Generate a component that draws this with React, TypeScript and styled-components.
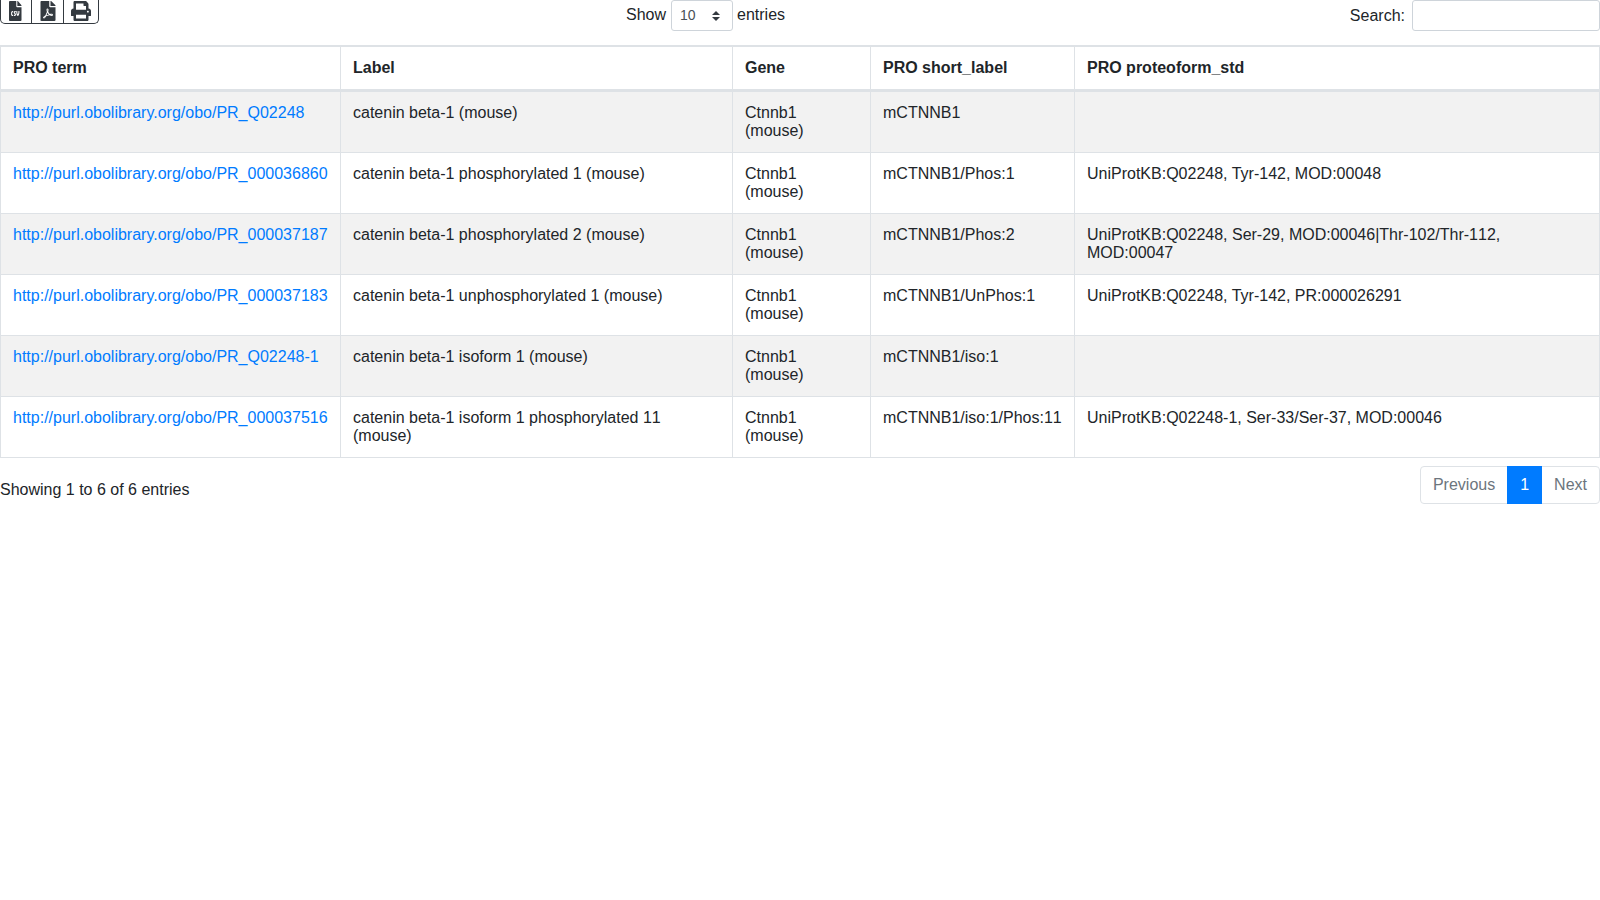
import React from 'react';
import styled, { createGlobalStyle } from 'styled-components';
import { FaFileCsv, FaFilePdf, FaPrint } from 'react-icons/fa';

const GlobalStyle = createGlobalStyle`
  body {
    margin: 0;
    background-color: #fff;
    font-family: "Liberation Sans", Arial, sans-serif;
    font-size: 16px;
    line-height: 18px;
    color: #212529;
  }
`;

const Toolbar = styled.div`
  display: grid;
  grid-template-columns: 410.5px 590px 1fr;
  align-items: start;
  height: 45px;
`;

const ButtonGroup = styled.div`
  display: flex;
  width: fit-content;
  height: 23px;
  border: 1px solid #343a40;
  border-top: none;
  border-radius: 0 0 5px 5px;
`;

const IconButton = styled.button<{ $w: number }>`
  display: flex;
  align-items: center;
  justify-content: center;
  width: ${(p) => p.$w}px;
  padding: 0 0 2px;
  background: none;
  border: none;
  border-left: 1px solid #343a40;
  color: #343a40;
  font-size: 20px;

  &:first-child {
    padding-right: 1px;
    border-left: none;
  }
`;

const CsvIcon = styled(FaFileCsv)`
  width: 12.5px;
  height: 20px;
`;

const LengthControl = styled.label`
  display: flex;
  justify-content: center;
  align-items: baseline;
  gap: 5px;
`;

const FakeSelect = styled.div`
  display: flex;
  align-items: center;
  justify-content: space-between;
  box-sizing: border-box;
  width: 62px;
  height: 31px;
  margin-right: -1px;
  padding: 0 12px 2px 8px;
  border: 1px solid #ced4da;
  border-radius: 3px;
  font-size: 14px;
  color: #495057;

  svg {
    margin-top: 2px;
  }
`;

const SearchControl = styled.label`
  display: flex;
  justify-content: flex-end;
  align-items: center;
  gap: 7px;
  height: 31px;
`;

const SearchInput = styled.input`
  box-sizing: border-box;
  width: 188px;
  height: 31px;
  border: 1px solid #ced4da;
  border-radius: 3px;
`;

const Table = styled.table`
  width: 100%;
  table-layout: fixed;
  border-collapse: separate;
  border-spacing: 0;
  border: 1px solid #dee2e6;
  border-right: none;
`;

const HeadCell = styled.th`
  padding: 12px;
  border-top: 1px solid #dee2e6;
  border-right: 1px solid #dee2e6;
  border-bottom: 2px solid #dee2e6;
  text-align: left;
  font-weight: 700;
`;

const Row = styled.tr<{ $striped: boolean }>`
  background-color: ${(p) => (p.$striped ? '#f2f2f2' : '#fff')};
`;

// the reference sets "11" without its kerning pair
const Cell = styled.td<{ $text?: string }>`
  padding: 12px;
  border-top: 1px solid #dee2e6;
  border-right: 1px solid #dee2e6;
  vertical-align: top;
  font-kerning: ${(p) => (p.$text && p.$text.includes('11') ? 'none' : 'auto')};
`;

const TermLink = styled.a`
  color: #007bff;
  text-decoration: none;
`;

const Footer = styled.div`
  display: flex;
  justify-content: space-between;
  align-items: flex-start;
  margin-top: 8px;
`;

const Info = styled.div`
  padding-top: 15px;
`;

const Pagination = styled.div`
  display: flex;
  height: 38px;
`;

const PageItem = styled.a<{ $active?: boolean }>`
  position: relative;
  z-index: ${(p) => (p.$active ? 1 : 0)};
  display: flex;
  align-items: center;
  padding: 0 12px;
  margin-left: -1px;
  background-color: ${(p) => (p.$active ? '#007bff' : '#fff')};
  border: 1px solid ${(p) => (p.$active ? '#007bff' : '#dee2e6')};
  color: ${(p) => (p.$active ? '#fff' : '#6c757d')};

  &:first-child {
    margin-left: 0;
    border-radius: 4px 0 0 4px;
  }

  &:last-child {
    border-radius: 0 4px 4px 0;
  }
`;

const columns = [
  { title: 'PRO term', width: 340 },
  { title: 'Label', width: 392 },
  { title: 'Gene', width: 138 },
  { title: 'PRO short_label', width: 204 },
  { title: 'PRO proteoform_std', width: 525 },
];

const rows = [
  ['PR_Q02248', 'catenin beta-1 (mouse)', 'mCTNNB1', ''],
  ['PR_000036860', 'catenin beta-1 phosphorylated 1 (mouse)', 'mCTNNB1/Phos:1', 'UniProtKB:Q02248, Tyr-142, MOD:00048'],
  ['PR_000037187', 'catenin beta-1 phosphorylated 2 (mouse)', 'mCTNNB1/Phos:2', 'UniProtKB:Q02248, Ser-29, MOD:00046|Thr-102/Thr-112, MOD:00047'],
  ['PR_000037183', 'catenin beta-1 unphosphorylated 1 (mouse)', 'mCTNNB1/UnPhos:1', 'UniProtKB:Q02248, Tyr-142, PR:000026291'],
  ['PR_Q02248-1', 'catenin beta-1 isoform 1 (mouse)', 'mCTNNB1/iso:1', ''],
  ['PR_000037516', 'catenin beta-1 isoform 1 phosphorylated 11 (mouse)', 'mCTNNB1/iso:1/Phos:11', 'UniProtKB:Q02248-1, Ser-33/Ser-37, MOD:00046'],
];

const App: React.FC = () => {
  return (
    <>
      <GlobalStyle />
      <Toolbar>
        <ButtonGroup>
          <IconButton $w={30}><CsvIcon preserveAspectRatio="none" /></IconButton>
          <IconButton $w={32}><FaFilePdf /></IconButton>
          <IconButton $w={35}><FaPrint /></IconButton>
        </ButtonGroup>
        <LengthControl>
          Show
          <FakeSelect>
            10
            <svg width="8" height="10" viewBox="0 0 4 5">
              <path d="M2 0 0 2h4zm0 5L0 3h4z" fill="#343a40" />
            </svg>
          </FakeSelect>
          entries
        </LengthControl>
        <SearchControl>
          Search:
          <SearchInput />
        </SearchControl>
      </Toolbar>
      <Table>
        <colgroup>
          {columns.map((c) => (
            <col key={c.title} style={{ width: c.width }} />
          ))}
        </colgroup>
        <thead>
          <tr>
            {columns.map((c) => (
              <HeadCell key={c.title}>{c.title}</HeadCell>
            ))}
          </tr>
        </thead>
        <tbody>
          {rows.map((r, i) => (
            <Row key={r[0]} $striped={i % 2 === 0}>
              <Cell>
                <TermLink href="#">http://purl.obolibrary.org/obo/{r[0]}</TermLink>
              </Cell>
              <Cell $text={r[1]}>{r[1]}</Cell>
              <Cell>Ctnnb1<br />(mouse)</Cell>
              <Cell $text={r[2]}>{r[2]}</Cell>
              <Cell $text={r[3]}>{r[3]}</Cell>
            </Row>
          ))}
        </tbody>
      </Table>
      <Footer>
        <Info>Showing 1 to 6 of 6 entries</Info>
        <Pagination>
          <PageItem>Previous</PageItem>
          <PageItem $active>1</PageItem>
          <PageItem>Next</PageItem>
        </Pagination>
      </Footer>
    </>
  );
};

export default App;
